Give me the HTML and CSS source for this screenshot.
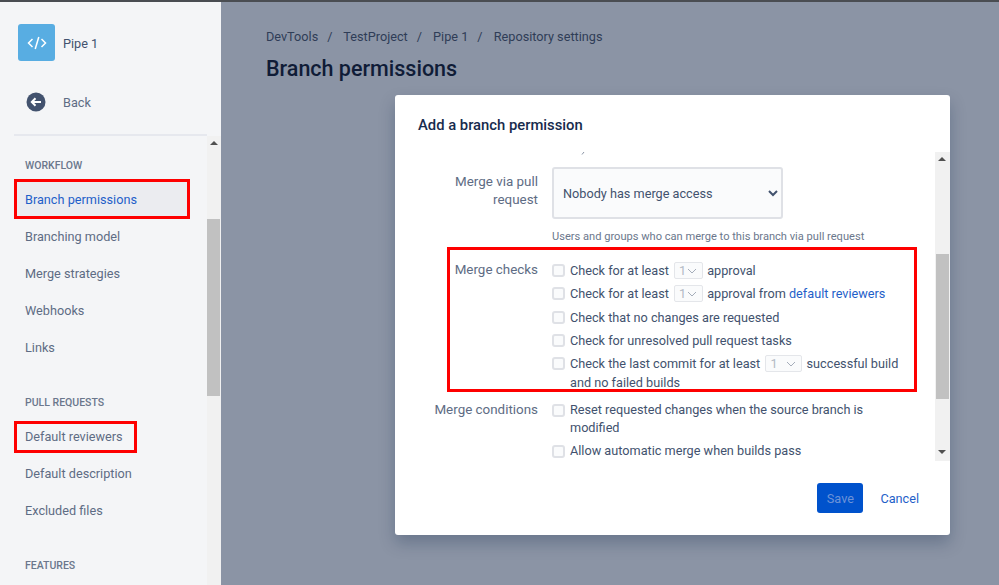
FILE: index.html
```html
<!DOCTYPE html>
<html lang="en">
<head>
    <meta charset="UTF-8">
    <meta name="viewport" content="width=device-width, initial-scale=1.0">
    <title>Branch permissions</title>
    <link rel="stylesheet" href="styles.css">
</head>
<body>
    <div class="topbar"></div>
    <div class="layout">
        <aside class="sidebar">
            <div class="sidebar-head">
                <div class="repo">
                    <div class="repo-logo">
                        <svg width="20" height="14" viewBox="0 0 20 14" fill="none" stroke="#fff" stroke-width="1.5">
                            <path d="M5.5 3 1.5 7l4 4"/>
                            <path d="M14.5 3l4 4-4 4"/>
                            <path d="M11.8 1 8.2 13"/>
                        </svg>
                    </div>
                    <span class="repo-name">Pipe 1</span>
                </div>
                <div class="back">
                    <svg class="back-icon" width="20" height="20" viewBox="0 0 20 20">
                        <circle cx="10" cy="10" r="9.5" fill="#42526e"/>
                        <path d="M15 10H6M9.5 6.3 5.8 10l3.7 3.7" fill="none" stroke="#fff" stroke-width="2"/>
                    </svg>
                    <span>Back</span>
                </div>
            </div>
            <div class="sidebar-scroll">
                <nav class="nav">
                    <div class="nav-title">WORKFLOW</div>
                    <a class="nav-item nav-active">Branch permissions</a>
                    <a class="nav-item">Branching model</a>
                    <a class="nav-item">Merge strategies</a>
                    <a class="nav-item">Webhooks</a>
                    <a class="nav-item">Links</a>
                    <div class="nav-title nav-title-gap">PULL REQUESTS</div>
                    <a class="nav-item"><span class="nav-marked">Default reviewers</span></a>
                    <a class="nav-item">Default description</a>
                    <a class="nav-item">Excluded files</a>
                    <div class="nav-title nav-title-gap">FEATURES</div>
                </nav>
                <div class="scrollbar scrollbar-side">
                    <span class="arrow-up"></span>
                    <div class="thumb"></div>
                </div>
            </div>
        </aside>
        <main class="main">
            <div class="breadcrumbs">
                <span>DevTools</span><span class="sep">/</span>
                <span>TestProject</span><span class="sep">/</span>
                <span>Pipe 1</span><span class="sep">/</span>
                <span>Repository settings</span>
            </div>
            <h1>Branch permissions</h1>
        </main>
    </div>

    <div class="modal">
        <h2>Add a branch permission</h2>
        <div class="modal-body">
            <div class="form">
                <svg class="clip-mark" width="4" height="3" viewBox="0 0 4 3">
                    <path d="M3 0 1 2.5" fill="none" stroke="#8993a4"/>
                </svg>
                <div class="form-row form-row-first">
                    <label class="form-label form-label-select">Merge via pull request</label>
                    <div class="form-field">
                        <select class="select-big">
                            <option>Nobody has merge access</option>
                        </select>
                        <div class="hint">Users and groups who can merge to this branch via pull request</div>
                    </div>
                </div>
                <div class="form-row merge-checks">
                    <div class="annot"></div>
                    <label class="form-label">Merge checks</label>
                    <div class="form-field checks">
                        <div class="check">
                            <input type="checkbox">
                            <span>Check for at least <select class="select-small" disabled><option>1</option></select> approval</span>
                        </div>
                        <div class="check">
                            <input type="checkbox">
                            <span>Check for at least <select class="select-small" disabled><option>1</option></select> approval from <a class="link">default reviewers</a></span>
                        </div>
                        <div class="check check-gap">
                            <input type="checkbox">
                            <span>Check that no changes are requested</span>
                        </div>
                        <div class="check">
                            <input type="checkbox">
                            <span>Check for unresolved pull request tasks</span>
                        </div>
                        <div class="check">
                            <input type="checkbox">
                            <span>Check the last commit for at least <select class="select-small select-wide" disabled><option>1</option></select> successful build and no failed builds</span>
                        </div>
                    </div>
                </div>
                <div class="form-row conditions">
                    <label class="form-label">Merge conditions</label>
                    <div class="form-field checks">
                        <div class="check">
                            <input type="checkbox">
                            <span>Reset requested changes when the source branch is modified</span>
                        </div>
                        <div class="check">
                            <input type="checkbox">
                            <span>Allow automatic merge when builds pass</span>
                        </div>
                    </div>
                </div>
            </div>
            <div class="scrollbar scrollbar-modal">
                <span class="arrow-up"></span>
                <div class="thumb"></div>
                <span class="arrow-down"></span>
            </div>
        </div>
        <div class="modal-footer">
            <button class="btn-save">Save</button>
            <a class="link cancel">Cancel</a>
        </div>
    </div>
</body>
</html>
```

FILE: styles.css
```css
* {
    box-sizing: border-box;
}

html, body {
    height: 100%;
}

body {
    margin: 0;
    font-family: Roboto, Arial, sans-serif;
    font-size: 12.7px;
    color: #42526e;
    background-color: #8b94a5;
    overflow: hidden;
    display: flex;
    flex-direction: column;
}

.topbar {
    height: 2px;
    flex-shrink: 0;
    background-color: #4a4d52;
}

.layout {
    flex: 1;
    display: flex;
    min-height: 0;
}

/* Sidebar */
.sidebar {
    width: 221px;
    flex-shrink: 0;
    display: flex;
    flex-direction: column;
    background-color: #f4f5f7;
}

.sidebar-head {
    height: 134px;
    margin: 0 14px;
    padding: 22px 4px 0;
    border-bottom: 2px solid #e6e8ee;
}

.repo {
    display: flex;
    align-items: center;
    gap: 8px;
}

.repo-logo {
    width: 37px;
    height: 37px;
    border-radius: 3px;
    background-color: #58ade2;
    display: flex;
    align-items: center;
    justify-content: center;
}

.repo-name {
    padding-top: 2px;
    color: #42526e;
}

.back {
    display: flex;
    align-items: center;
    gap: 17px;
    margin-top: 31px;
    padding-left: 8px;
    color: #5e6c84;
}

.back-icon {
    display: block;
}

.sidebar-scroll {
    flex: 1;
    display: flex;
    min-height: 0;
}

.nav {
    flex: 1;
    padding: 22px 20px 0 17px;
    overflow: hidden;
}

.nav-title {
    height: 16px;
    line-height: 16px;
    margin-bottom: 8px;
    padding-left: 8px;
    font-size: 10.5px;
    font-weight: 500;
    color: #6b778c;
}

.nav-title-gap {
    margin-top: 31px;
}

.nav-item {
    display: block;
    height: 34px;
    line-height: 36px;
    margin-bottom: 3px;
    padding-left: 8px;
    color: #5e6c84;
}

.nav-active {
    color: #1f5fc9;
    background-color: #ebecf0;
    outline: 3px solid #fe0000;
}

.nav-marked {
    display: inline-block;
    line-height: 20px;
    padding: 3px 11px 3px 8px;
    margin-left: -8px;
    outline: 3px solid #fe0000;
}

/* Main */
.main {
    flex: 1;
    padding: 25px 45px;
}

.breadcrumbs {
    line-height: 20px;
    color: #2f3d57;
}

.sep {
    margin: 0 8px 0 9px;
}

h1 {
    margin: 8px 0 0;
    font-size: 21.5px;
    line-height: 28px;
    font-weight: 500;
    color: #101c37;
}

/* Modal */
.modal {
    position: absolute;
    left: 395px;
    top: 95px;
    width: 555px;
    height: 440px;
    border-radius: 3px;
    background-color: white;
    box-shadow: 0 8px 16px rgba(9,30,66,0.25);
    display: flex;
    flex-direction: column;
}

h2 {
    margin: 0;
    height: 57px;
    padding: 20px 23px 0;
    font-size: 14.8px;
    line-height: 20px;
    font-weight: 500;
    color: #172b4d;
}

.modal-body {
    height: 309px;
    display: flex;
    justify-content: space-between;
}

.form {
    flex: 1;
    overflow: hidden;
    padding-left: 23px;
}

.clip-mark {
    display: block;
    height: 3px;
    margin-left: 163px;
}

.form-row {
    display: flex;
    gap: 14px;
}

.form-row-first {
    margin-top: 12px;
}

.form-label {
    width: 120px;
    flex-shrink: 0;
    font-size: 13.4px;
    line-height: 18px;
    text-align: right;
    color: #5e6c84;
}

.form-label-select {
    padding-top: 6px;
}

.hint {
    margin-top: 10px;
    line-height: 16px;
    font-size: 11.1px;
    color: #6b778c;
}

.select-big {
    display: block;
    width: 231px;
    height: 52px;
    padding: 0 5px;
    border: 2px solid #dfe1e6;
    border-radius: 3px;
    background-color: #fafbfc;
    font-family: inherit;
    font-size: 12.7px;
    color: #42526e;
}

.merge-checks {
    position: relative;
    margin-top: 16px;
}

.annot {
    position: absolute;
    left: 29px;
    top: -14px;
    width: 470px;
    height: 145px;
    border: 3px solid #fe0000;
}

.conditions {
    margin-top: 5px;
}

.checks {
    flex: 1;
    padding-right: 30px;
}

.check {
    display: flex;
    gap: 5px;
    line-height: 19px;
    margin-bottom: 4px;
    color: #42526e;
}

.conditions .check {
    line-height: 18px;
    margin-bottom: 5px;
}

.check-gap {
    margin-top: 5px;
}

.check input {
    appearance: none;
    width: 13px;
    height: 13px;
    flex-shrink: 0;
    margin: 3px 0 0;
    border: 2px solid #dfe1e6;
    border-radius: 3px;
    background-color: #fafbfc;
}

.select-small {
    appearance: none;
    width: 29px;
    height: 17px;
    padding: 0 0 0 4px;
    margin: 1px 1px 1px 2px;
    vertical-align: top;
    border: 1px solid #e4e6ea;
    border-radius: 2px;
    background: #fafbfc url("data:image/svg+xml,%3Csvg xmlns='http://www.w3.org/2000/svg' width='10' height='6'%3E%3Cpath d='M1 1l4 4 4-4' fill='none' stroke='%23a5adba'/%3E%3C/svg%3E") no-repeat right 5px center;
    font-family: inherit;
    font-size: 12.7px;
    line-height: 15px;
    color: #b3bac5;
    opacity: 1;
}

.select-wide {
    width: 37px;
}

.link {
    color: #1f5fc9;
}

/* Scrollbars */
.scrollbar {
    position: relative;
    flex-shrink: 0;
    background-color: #f1f1f1;
}

.thumb {
    position: absolute;
    background-color: #c1c1c1;
}

.scrollbar-side {
    width: 14px;
}

.scrollbar-side .thumb {
    left: 0;
    right: 1px;
    top: 83px;
    height: 177px;
}

.scrollbar-modal {
    width: 15px;
}

.scrollbar-modal .thumb {
    left: 1px;
    right: 1px;
    top: 102px;
    height: 145px;
}

.arrow-up, .arrow-down {
    position: absolute;
    left: 3px;
    border-left: 4px solid transparent;
    border-right: 4px solid transparent;
}

.arrow-up {
    top: 5px;
    border-bottom: 4px solid #505050;
}

.arrow-down {
    bottom: 7px;
    border-top: 4px solid #505050;
}

/* Footer */
.modal-footer {
    flex: 1;
    display: flex;
    align-items: center;
    justify-content: flex-end;
    gap: 17px;
    padding: 0 31px 0 0;
}

.btn-save {
    width: 46px;
    height: 30px;
    border: none;
    border-radius: 3px;
    background-color: #0052cc;
    color: #6d93d8;
    font-family: inherit;
    font-size: 12.7px;
}
```
